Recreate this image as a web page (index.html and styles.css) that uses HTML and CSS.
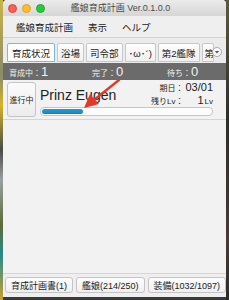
FILE: index.html
```html
<!DOCTYPE html>
<html lang="ja">
<head>
<meta charset="utf-8">
<title>艦娘育成計画</title>
<link rel="stylesheet" href="styles.css">
</head>
<body>
<div class="desk">
  <div class="strip-left"></div>
  <div class="win">
    <div class="titlebar">
      <div class="lights">
        <span class="light red"></span>
        <span class="light yellow"></span>
        <span class="light green"></span>
      </div>
      <div class="title">艦娘育成計画 Ver.0.1.0.0</div>
    </div>
    <div class="menubar">
      <span class="menu">艦娘育成計画</span>
      <span class="menu">表示</span>
      <span class="menu">ヘルプ</span>
    </div>
    <div class="tabs">
      <div class="tab selected">育成状況</div>
      <div class="tab">浴場</div>
      <div class="tab">司令部</div>
      <div class="tab">･ω･´)</div>
      <div class="tab">第2艦隊</div>
      <div class="tab partial">第</div>
      <div class="more"><svg width="10" height="10" viewBox="0 0 10 10"><circle cx="5" cy="5" r="4.5" fill="#fafafa" stroke="#9a9a9a" stroke-width="0.8"/><path d="M2.8 4 L7.2 4 L5 6.6 Z" fill="#555"/></svg></div>
    </div>
    <div class="status">
      <div class="stat"><span class="lbl">育成中：</span><span class="num">1</span></div>
      <div class="stat"><span class="lbl">完了：</span><span class="num">0</span></div>
      <div class="stat"><span class="lbl">待ち：</span><span class="num">0</span></div>
    </div>
    <div class="list">
      <div class="row">
        <div class="state">進行中</div>
        <div class="info">
          <div class="top">
            <div class="name">Prinz Eugen</div>
            <div class="meta">
              <span class="mlbl">期日：</span><span class="mval big">03/01</span>
              <span class="mlbl">残りLv：</span><span class="mval"><span class="big">1</span><span class="unit">Lv</span></span>
            </div>
          </div>
          <div class="bar"><div class="fill" style="width:24%"></div></div>
        </div>
      </div>
    </div>
    <div class="footer">
      <div class="btn">育成計画書(1)</div>
      <div class="btn">艦娘(214/250)</div>
      <div class="btn">装備(1032/1097)</div>
    </div>
  </div>
  <div class="strip-right"></div>
</div>
<svg class="arrow" width="229" height="300" viewBox="0 0 229 300">
  <line x1="119" y1="80" x2="94" y2="100" stroke="#e23a24" stroke-width="2.4" stroke-linecap="round"/>
  <path d="M84 108 L90 94 L99 104 Z" fill="#e23a24"/>
</svg>
</body>
</html>
```
FILE: styles.css
```css
* { box-sizing: border-box; }
html, body { margin: 0; padding: 0; }
body {
  width: 229px;
  height: 300px;
  overflow: hidden;
  background: #3a3a36;
  font-family: "Liberation Sans", "Noto Sans CJK JP", sans-serif;
  position: relative;
}
.desk {
  display: flex;
  height: 300px;
}
.strip-left {
  width: 3px;
  background: linear-gradient(#c9b44a 0%, #8a8a6a 25%, #d4b42a 35%, #4a4a4a 50%, #9aa0a0 60%, #5b6b3a 75%, #2a8a8a 85%, #caa030 100%);
}
.strip-right {
  width: 3px;
  background: linear-gradient(#5a5a3a, #2e2e2a 40%, #4a3a30 80%, #2a2a2a);
}
.win {
  width: 223px;
  height: 297px;
  display: flex;
  flex-direction: column;
  background: #f2f2f2;
  border-radius: 4px 4px 0 0;
  overflow: hidden;
}
.titlebar {
  height: 16px;
  flex: none;
  background: linear-gradient(#ebebeb, #d6d6d6);
  display: flex;
  align-items: center;
  position: relative;
}
.lights {
  display: flex;
  gap: 5px;
  padding-left: 5px;
}
.light {
  width: 9px;
  height: 9px;
  border-radius: 50%;
  display: block;
}
.red { background: #fc5f57; border: 0.5px solid #e0443e; }
.yellow { background: #fdbc2e; border: 0.5px solid #dea123; }
.green { background: #29c840; border: 0.5px solid #1aab29; }
.title {
  flex: 1;
  text-align: center;
  font-size: 9px;
  color: #4a4a4a;
  padding-right: 30px;
  line-height: 16px;
}
.menubar {
  height: 22px;
  flex: none;
  background: #efefef;
  border-bottom: 1px solid #d2d2d2;
  display: flex;
  align-items: center;
  gap: 15px;
  padding-left: 13px;
  font-size: 9.5px;
  color: #222;
}
.tabs {
  height: 25px;
  flex: none;
  background: #ebebeb;
  display: flex;
  align-items: flex-end;
  gap: 2px;
  padding-left: 4px;
  padding-bottom: 1px;
  position: relative;
}
.tab {
  height: 19px;
  padding: 0 3px;
  font-size: 9.5px;
  color: #222;
  background: linear-gradient(#fdfdfd, #f0f0f0);
  border: 1px solid #c8c8c8;
  border-radius: 2px 2px 0 0;
  display: flex;
  align-items: center;
  white-space: nowrap;
}
.tab.selected {
  background: #ffffff;
  border-color: #7db7e4;
  padding: 0 4px;
}
.tab.partial {
  width: 12px;
  padding: 0 2px;
  overflow: hidden;
}
.more {
  position: absolute;
  right: 4px;
  bottom: 6px;
  width: 10px;
  height: 10px;
  display: flex;
}
.status {
  height: 17px;
  flex: none;
  background: #6b6b6b;
  color: #f2f2f2;
  display: grid;
  grid-template-columns: 83px 75px 1fr;
  align-items: center;
  padding-left: 6px;
}
.stat { display: flex; align-items: baseline; }
.lbl { font-size: 8px; }
.num { font-size: 13px; line-height: 15px; }
.list {
  flex: 1;
  background: #f2f2f2;
}
.row {
  display: flex;
  gap: 4px;
  padding: 2px 13px 3px 4px;
  border-bottom: 1px solid #d4d4d4;
  height: 40px;
}
.state {
  width: 29px;
  height: 35px;
  flex: none;
  background: linear-gradient(#fbfbfb, #ececec);
  border: 1px solid #c4c4c4;
  border-radius: 3px;
  font-size: 8px;
  color: #222;
  display: flex;
  align-items: center;
  justify-content: center;
}
.info {
  flex: 1;
  display: flex;
  flex-direction: column;
}
.top {
  display: flex;
  justify-content: space-between;
  height: 25px;
}
.name {
  font-size: 14px;
  color: #222;
  padding-top: 6px;
  line-height: 14px;
}
.meta {
  display: grid;
  grid-template-columns: auto auto;
  column-gap: 2px;
  align-items: baseline;
  color: #222;
  line-height: 11px;
}
.mlbl { font-size: 8px; text-align: right; }
.mval { text-align: right; font-size: 8px; }
.big { font-size: 11px; }
.mval .big { margin-right: 1px; }
.unit { font-size: 8px; }
.bar {
  height: 9px;
  background: #fcfcfc;
  border: 1px solid #c6c6c6;
  border-radius: 4px;
  overflow: hidden;
  padding: 1px;
}
.fill {
  height: 100%;
  background: linear-gradient(#2a9ad4, #1682bd);
  border-radius: 3px;
}
.footer {
  height: 24px;
  flex: none;
  border-top: 1px solid #d6d6d6;
  background: #efefef;
  display: flex;
  gap: 3px;
  padding: 3px 0 0 2px;
}
.btn {
  height: 16px;
  padding: 0 5px;
  font-size: 9px;
  color: #222;
  background: linear-gradient(#fdfdfd, #efefef);
  border: 1px solid #c4c4c4;
  border-radius: 3px;
  display: flex;
  align-items: center;
  white-space: nowrap;
}
.arrow {
  position: absolute;
  left: 0;
  top: 0;
  pointer-events: none;
}
```
